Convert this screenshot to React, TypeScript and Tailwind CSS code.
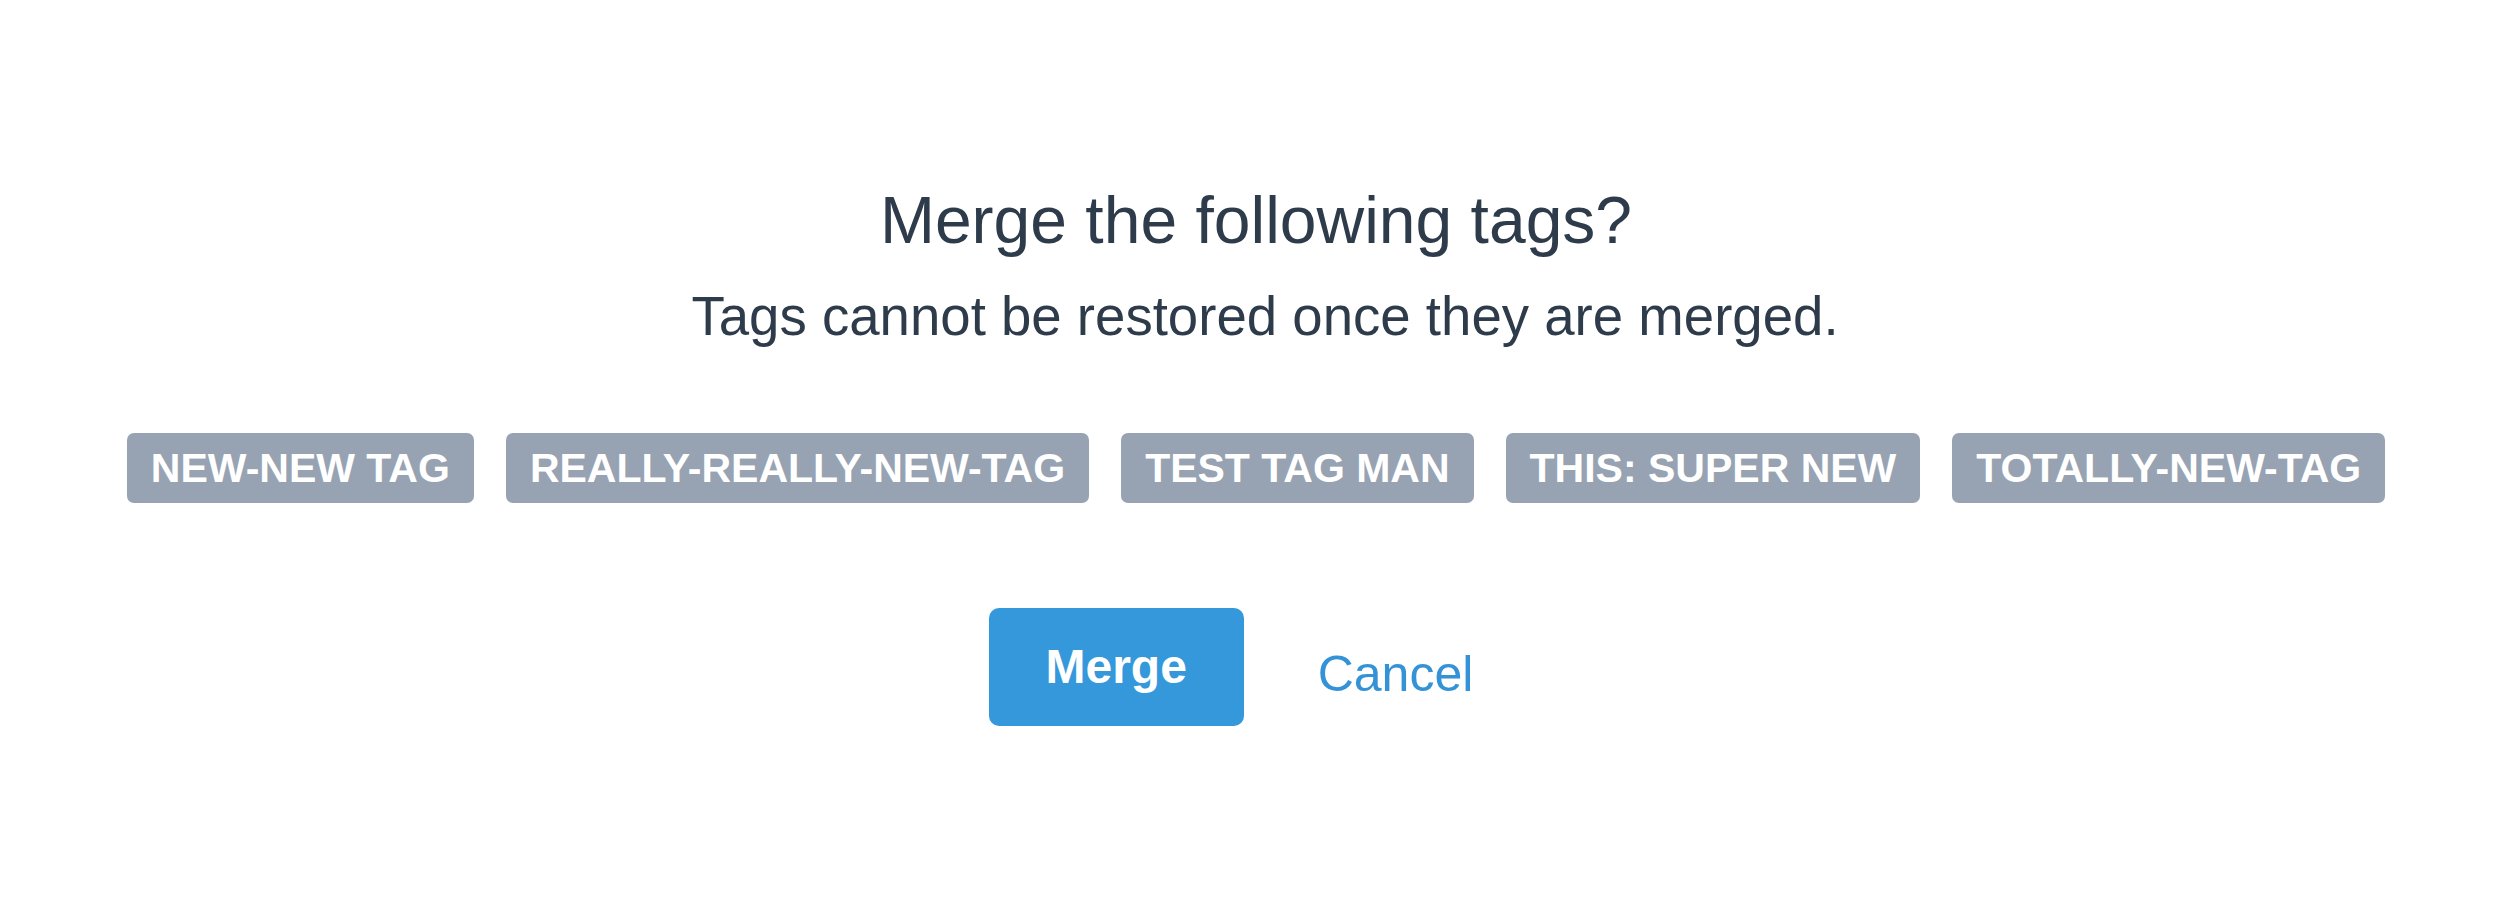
import React from 'react';

const tags = ['NEW-NEW TAG', 'REALLY-REALLY-NEW-TAG', 'TEST TAG MAN', 'THIS: SUPER NEW', 'TOTALLY-NEW-TAG'];

export default function App() {
  return (
    <div
      className="w-full h-[916px] bg-white flex flex-col items-center pt-[181px]"
      style={{ fontFamily: '"Liberation Sans", Arial, sans-serif' }}
    >
      <h1 className="text-[66px] leading-[79px] font-normal text-[#2d3b4b]">Merge the following tags?</h1>
      <p className="mt-[24px] pl-[18px] text-[54.6px] leading-[65px] text-[#2d3b4b]">Tags cannot be restored once they are merged.</p>

      <div className="mt-[84px] flex justify-center gap-[32px]">
        {tags.map((tag) => (
          <span
            key={tag}
            className="px-[24px] py-[10px] rounded-[7px] bg-[#97a3b2] text-white font-bold text-[41px] leading-[50px] whitespace-nowrap"
          >
            {tag}
          </span>
        ))}
      </div>

      <div className="mt-[105px] flex items-center gap-[34px] pr-[10px]">
        <button className="w-[255px] h-[118px] rounded-[10px] bg-[#3498db] text-white font-bold text-[48px] leading-none flex items-center justify-center">
          Merge
        </button>
        <button className="px-[40px] pt-[14px] text-[50px] leading-[60px] text-[#3492d6]">Cancel</button>
      </div>
    </div>
  );
}
